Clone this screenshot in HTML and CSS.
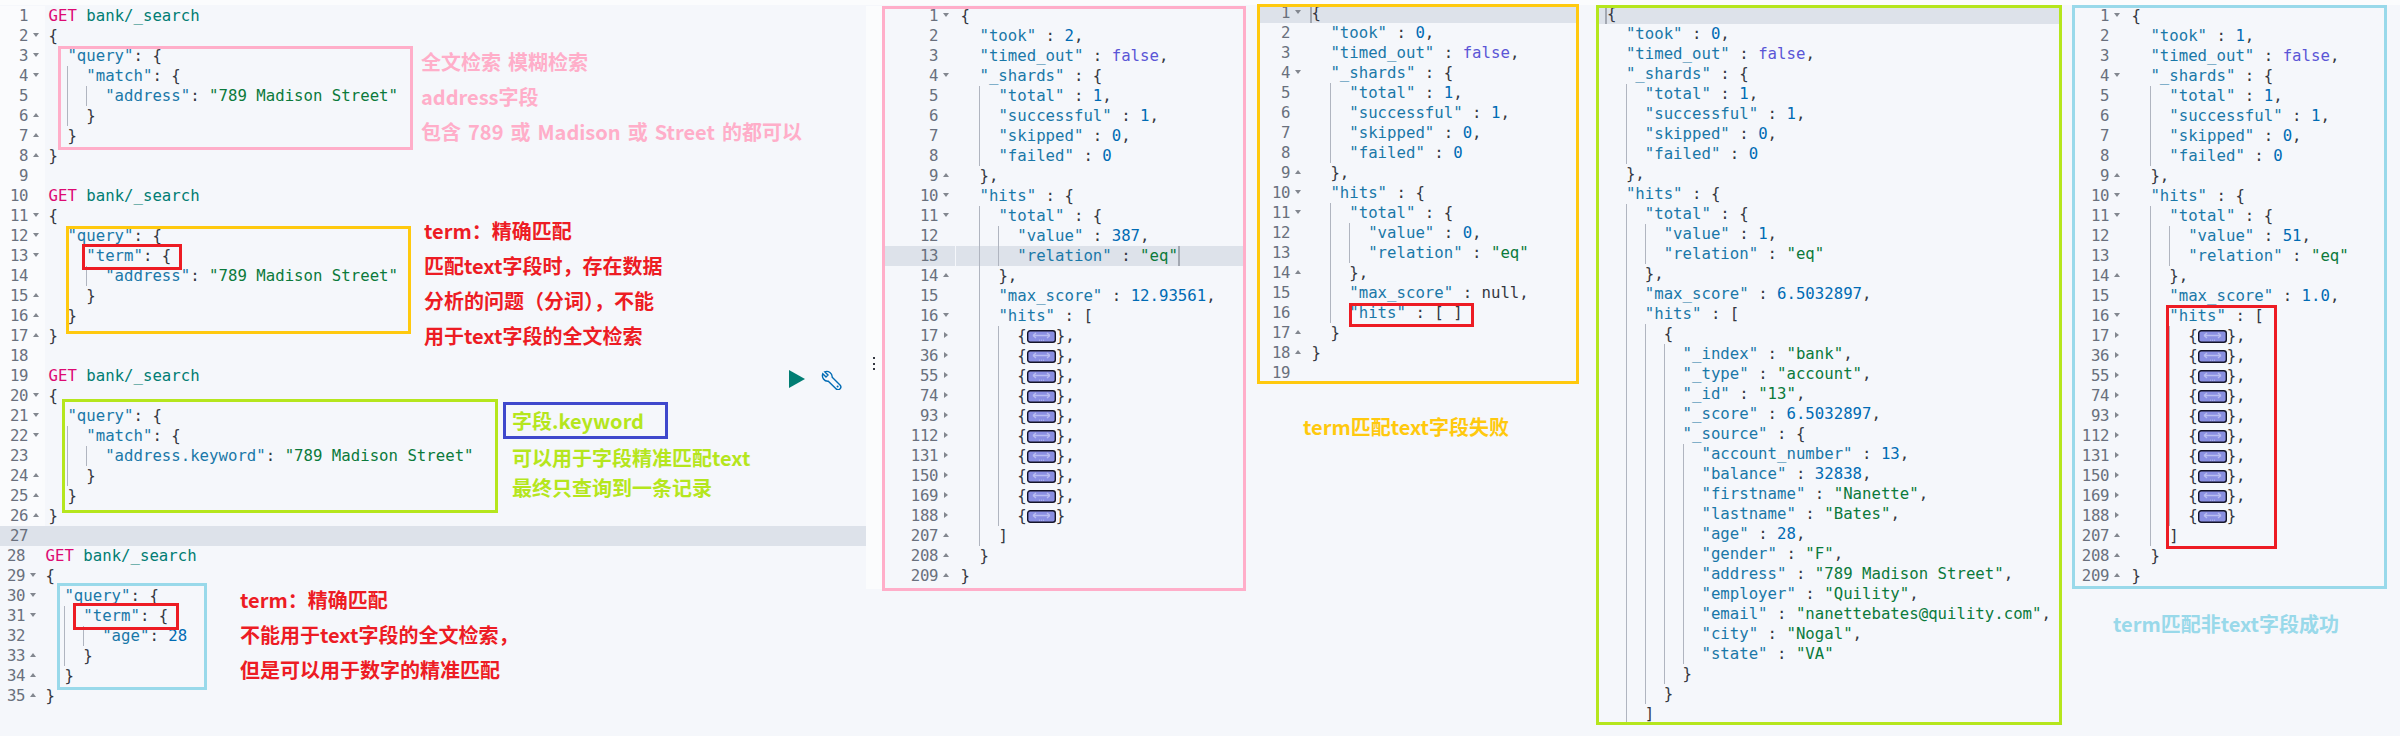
FILE: index.html
```html
<!DOCTYPE html>
<html lang="zh-CN">
<head>
<meta charset="utf-8">
<title>bank/_search</title>
<link rel="stylesheet" href="styles.css">
</head>
<body>
<svg class="defs" width="0" height="0" aria-hidden="true">
  <symbol id="fw" viewBox="0 0 29 13">
    <rect x="0.7" y="0.7" width="27.6" height="11.6" rx="2.5" fill="#8a8fe2" stroke="#15152a" stroke-width="1.4"/>
    <path d="M6 5.5H23M6 5.5L9 3M6 5.5L9 8M23 5.5L20 3M23 5.5L20 8" fill="none" stroke="#b9bdf0" stroke-width="1.3"/>
    <path d="M12 10.2h1M14 10.2h1M16 10.2h1" stroke="#b9bdf0" stroke-width="1"/>
  </symbol>
</svg>
<main class="stage">

  <section class="editor">
    <div class="row"><i class="ln">1</i><i class="fd"></i><span class="cd"><i class="m">GET</i> <i class="u">bank/_search</i></span></div>
    <div class="row"><i class="ln">2</i><i class="fd dn"></i><span class="cd">{</span></div>
    <div class="row"><i class="ln">3</i><i class="fd dn"></i><span class="cd">  <i class="k">"query"</i>: {</span></div>
    <div class="row"><i class="ln">4</i><i class="fd dn"></i><span class="cd">  <i class="g">  </i><i class="k">"match"</i>: {</span></div>
    <div class="row"><i class="ln">5</i><i class="fd"></i><span class="cd">  <i class="g">  </i><i class="g">  </i><i class="k">"address"</i>: <i class="s">"789 Madison Street"</i></span></div>
    <div class="row"><i class="ln">6</i><i class="fd up"></i><span class="cd">  <i class="g">  </i>}</span></div>
    <div class="row"><i class="ln">7</i><i class="fd up"></i><span class="cd">  }</span></div>
    <div class="row"><i class="ln">8</i><i class="fd up"></i><span class="cd">}</span></div>
    <div class="row"><i class="ln">9</i><i class="fd"></i><span class="cd"></span></div>
    <div class="row"><i class="ln">10</i><i class="fd"></i><span class="cd"><i class="m">GET</i> <i class="u">bank/_search</i></span></div>
    <div class="row"><i class="ln">11</i><i class="fd dn"></i><span class="cd">{</span></div>
    <div class="row"><i class="ln">12</i><i class="fd dn"></i><span class="cd">  <i class="k">"query"</i>: {</span></div>
    <div class="row"><i class="ln">13</i><i class="fd dn"></i><span class="cd">  <i class="g">  </i><i class="k">"term"</i>: {</span></div>
    <div class="row"><i class="ln">14</i><i class="fd"></i><span class="cd">  <i class="g">  </i><i class="g">  </i><i class="k">"address"</i>: <i class="s">"789 Madison Street"</i></span></div>
    <div class="row"><i class="ln">15</i><i class="fd up"></i><span class="cd">  <i class="g">  </i>}</span></div>
    <div class="row"><i class="ln">16</i><i class="fd up"></i><span class="cd">  }</span></div>
    <div class="row"><i class="ln">17</i><i class="fd up"></i><span class="cd">}</span></div>
    <div class="row"><i class="ln">18</i><i class="fd"></i><span class="cd"></span></div>
    <div class="row"><i class="ln">19</i><i class="fd"></i><span class="cd"><i class="m">GET</i> <i class="u">bank/_search</i></span></div>
    <div class="row"><i class="ln">20</i><i class="fd dn"></i><span class="cd">{</span></div>
    <div class="row"><i class="ln">21</i><i class="fd dn"></i><span class="cd">  <i class="k">"query"</i>: {</span></div>
    <div class="row"><i class="ln">22</i><i class="fd dn"></i><span class="cd">  <i class="g">  </i><i class="k">"match"</i>: {</span></div>
    <div class="row"><i class="ln">23</i><i class="fd"></i><span class="cd">  <i class="g">  </i><i class="g">  </i><i class="k">"address.keyword"</i>: <i class="s">"789 Madison Street"</i></span></div>
    <div class="row"><i class="ln">24</i><i class="fd up"></i><span class="cd">  <i class="g">  </i>}</span></div>
    <div class="row"><i class="ln">25</i><i class="fd up"></i><span class="cd">  }</span></div>
    <div class="row"><i class="ln">26</i><i class="fd up"></i><span class="cd">}</span></div>
    <div class="row hl"><i class="ln">27</i><i class="fd"></i><span class="cd"></span></div>
    <div class="pasted">
      <div class="row"><i class="ln">28</i><i class="fd"></i><span class="cd"><i class="m">GET</i> <i class="u">bank/_search</i></span></div>
      <div class="row"><i class="ln">29</i><i class="fd dn"></i><span class="cd">{</span></div>
      <div class="row"><i class="ln">30</i><i class="fd dn"></i><span class="cd">  <i class="k">"query"</i>: {</span></div>
      <div class="row"><i class="ln">31</i><i class="fd dn"></i><span class="cd">  <i class="g">  </i><i class="k">"term"</i>: {</span></div>
      <div class="row"><i class="ln">32</i><i class="fd"></i><span class="cd">  <i class="g">  </i><i class="g">  </i><i class="k">"age"</i>: <i class="n">28</i></span></div>
      <div class="row"><i class="ln">33</i><i class="fd up"></i><span class="cd">  <i class="g">  </i>}</span></div>
      <div class="row"><i class="ln">34</i><i class="fd up"></i><span class="cd">  }</span></div>
      <div class="row"><i class="ln">35</i><i class="fd up"></i><span class="cd">}</span></div>
    </div>
  </section>

  <div class="splitter"><i></i><i></i><i></i></div>

  <section class="panel p-pink">
    <div class="row"><i class="ln">1</i><i class="fd dn"></i><span class="cd">{</span></div>
    <div class="row"><i class="ln">2</i><i class="fd"></i><span class="cd">  <i class="k">"took"</i> : <i class="n">2</i>,</span></div>
    <div class="row"><i class="ln">3</i><i class="fd"></i><span class="cd">  <i class="k">"timed_out"</i> : <i class="b">false</i>,</span></div>
    <div class="row"><i class="ln">4</i><i class="fd dn"></i><span class="cd">  <i class="k">"_shards"</i> : {</span></div>
    <div class="row"><i class="ln">5</i><i class="fd"></i><span class="cd">  <i class="g">  </i><i class="k">"total"</i> : <i class="n">1</i>,</span></div>
    <div class="row"><i class="ln">6</i><i class="fd"></i><span class="cd">  <i class="g">  </i><i class="k">"successful"</i> : <i class="n">1</i>,</span></div>
    <div class="row"><i class="ln">7</i><i class="fd"></i><span class="cd">  <i class="g">  </i><i class="k">"skipped"</i> : <i class="n">0</i>,</span></div>
    <div class="row"><i class="ln">8</i><i class="fd"></i><span class="cd">  <i class="g">  </i><i class="k">"failed"</i> : <i class="n">0</i></span></div>
    <div class="row"><i class="ln">9</i><i class="fd up"></i><span class="cd">  },</span></div>
    <div class="row"><i class="ln">10</i><i class="fd dn"></i><span class="cd">  <i class="k">"hits"</i> : {</span></div>
    <div class="row"><i class="ln">11</i><i class="fd dn"></i><span class="cd">  <i class="g">  </i><i class="k">"total"</i> : {</span></div>
    <div class="row"><i class="ln">12</i><i class="fd"></i><span class="cd">  <i class="g">  </i><i class="g">  </i><i class="k">"value"</i> : <i class="n">387</i>,</span></div>
    <div class="row hl"><i class="ln">13</i><i class="fd split"></i><span class="cd">  <i class="g">  </i><i class="g">  </i><i class="k">"relation"</i> : <i class="s">"eq"</i><i class="cur"></i></span></div>
    <div class="row"><i class="ln">14</i><i class="fd up"></i><span class="cd">  <i class="g">  </i>},</span></div>
    <div class="row"><i class="ln">15</i><i class="fd"></i><span class="cd">  <i class="g">  </i><i class="k">"max_score"</i> : <i class="n">12.93561</i>,</span></div>
    <div class="row"><i class="ln">16</i><i class="fd dn"></i><span class="cd">  <i class="g">  </i><i class="k">"hits"</i> : [</span></div>
    <div class="row"><i class="ln">17</i><i class="fd rt"></i><span class="cd">  <i class="g">  </i><i class="g">  </i>{<svg class="fw"><use href="#fw"/></svg>},</span></div>
    <div class="row"><i class="ln">36</i><i class="fd rt"></i><span class="cd">  <i class="g">  </i><i class="g">  </i>{<svg class="fw"><use href="#fw"/></svg>},</span></div>
    <div class="row"><i class="ln">55</i><i class="fd rt"></i><span class="cd">  <i class="g">  </i><i class="g">  </i>{<svg class="fw"><use href="#fw"/></svg>},</span></div>
    <div class="row"><i class="ln">74</i><i class="fd rt"></i><span class="cd">  <i class="g">  </i><i class="g">  </i>{<svg class="fw"><use href="#fw"/></svg>},</span></div>
    <div class="row"><i class="ln">93</i><i class="fd rt"></i><span class="cd">  <i class="g">  </i><i class="g">  </i>{<svg class="fw"><use href="#fw"/></svg>},</span></div>
    <div class="row"><i class="ln">112</i><i class="fd rt"></i><span class="cd">  <i class="g">  </i><i class="g">  </i>{<svg class="fw"><use href="#fw"/></svg>},</span></div>
    <div class="row"><i class="ln">131</i><i class="fd rt"></i><span class="cd">  <i class="g">  </i><i class="g">  </i>{<svg class="fw"><use href="#fw"/></svg>},</span></div>
    <div class="row"><i class="ln">150</i><i class="fd rt"></i><span class="cd">  <i class="g">  </i><i class="g">  </i>{<svg class="fw"><use href="#fw"/></svg>},</span></div>
    <div class="row"><i class="ln">169</i><i class="fd rt"></i><span class="cd">  <i class="g">  </i><i class="g">  </i>{<svg class="fw"><use href="#fw"/></svg>},</span></div>
    <div class="row"><i class="ln">188</i><i class="fd rt"></i><span class="cd">  <i class="g">  </i><i class="g">  </i>{<svg class="fw"><use href="#fw"/></svg>}</span></div>
    <div class="row"><i class="ln">207</i><i class="fd up"></i><span class="cd">  <i class="g">  </i>]</span></div>
    <div class="row"><i class="ln">208</i><i class="fd up"></i><span class="cd">  }</span></div>
    <div class="row"><i class="ln">209</i><i class="fd up"></i><span class="cd">}</span></div>
  </section>

  <div class="col c-yellow">
    <section class="panel p-yellow">
      <div class="row hl"><i class="ln">1</i><i class="fd dn"></i><span class="cd"><i class="cur cur-start"></i>{</span></div>
      <div class="row"><i class="ln">2</i><i class="fd"></i><span class="cd">  <i class="k">"took"</i> : <i class="n">0</i>,</span></div>
      <div class="row"><i class="ln">3</i><i class="fd"></i><span class="cd">  <i class="k">"timed_out"</i> : <i class="b">false</i>,</span></div>
      <div class="row"><i class="ln">4</i><i class="fd dn"></i><span class="cd">  <i class="k">"_shards"</i> : {</span></div>
      <div class="row"><i class="ln">5</i><i class="fd"></i><span class="cd">  <i class="g">  </i><i class="k">"total"</i> : <i class="n">1</i>,</span></div>
      <div class="row"><i class="ln">6</i><i class="fd"></i><span class="cd">  <i class="g">  </i><i class="k">"successful"</i> : <i class="n">1</i>,</span></div>
      <div class="row"><i class="ln">7</i><i class="fd"></i><span class="cd">  <i class="g">  </i><i class="k">"skipped"</i> : <i class="n">0</i>,</span></div>
      <div class="row"><i class="ln">8</i><i class="fd"></i><span class="cd">  <i class="g">  </i><i class="k">"failed"</i> : <i class="n">0</i></span></div>
      <div class="row"><i class="ln">9</i><i class="fd up"></i><span class="cd">  },</span></div>
      <div class="row"><i class="ln">10</i><i class="fd dn"></i><span class="cd">  <i class="k">"hits"</i> : {</span></div>
      <div class="row"><i class="ln">11</i><i class="fd dn"></i><span class="cd">  <i class="g">  </i><i class="k">"total"</i> : {</span></div>
      <div class="row"><i class="ln">12</i><i class="fd"></i><span class="cd">  <i class="g">  </i><i class="g">  </i><i class="k">"value"</i> : <i class="n">0</i>,</span></div>
      <div class="row"><i class="ln">13</i><i class="fd"></i><span class="cd">  <i class="g">  </i><i class="g">  </i><i class="k">"relation"</i> : <i class="s">"eq"</i></span></div>
      <div class="row"><i class="ln">14</i><i class="fd up"></i><span class="cd">  <i class="g">  </i>},</span></div>
      <div class="row"><i class="ln">15</i><i class="fd"></i><span class="cd">  <i class="g">  </i><i class="k">"max_score"</i> : <i class="nl">null</i>,</span></div>
      <div class="row"><i class="ln">16</i><i class="fd"></i><span class="cd">  <i class="g">  </i><i class="k">"hits"</i> : [ ]</span></div>
      <div class="row"><i class="ln">17</i><i class="fd up"></i><span class="cd">  }</span></div>
      <div class="row"><i class="ln">18</i><i class="fd up"></i><span class="cd">}</span></div>
      <div class="row"><i class="ln">19</i><i class="fd"></i><span class="cd"></span></div>
      <div class="mark mark-y"></div>
    </section>
    <p class="caption cap-yellow">term匹配text字段失败</p>
  </div>

  <section class="panel p-lime">
    <div class="row hl"><span class="cd"><i class="cur cur-start"></i>{</span></div>
    <div class="row"><span class="cd">  <i class="k">"took"</i> : <i class="n">0</i>,</span></div>
    <div class="row"><span class="cd">  <i class="k">"timed_out"</i> : <i class="b">false</i>,</span></div>
    <div class="row"><span class="cd">  <i class="k">"_shards"</i> : {</span></div>
    <div class="row"><span class="cd">  <i class="g">  </i><i class="k">"total"</i> : <i class="n">1</i>,</span></div>
    <div class="row"><span class="cd">  <i class="g">  </i><i class="k">"successful"</i> : <i class="n">1</i>,</span></div>
    <div class="row"><span class="cd">  <i class="g">  </i><i class="k">"skipped"</i> : <i class="n">0</i>,</span></div>
    <div class="row"><span class="cd">  <i class="g">  </i><i class="k">"failed"</i> : <i class="n">0</i></span></div>
    <div class="row"><span class="cd">  },</span></div>
    <div class="row"><span class="cd">  <i class="k">"hits"</i> : {</span></div>
    <div class="row"><span class="cd">  <i class="g">  </i><i class="k">"total"</i> : {</span></div>
    <div class="row"><span class="cd">  <i class="g">  </i><i class="g">  </i><i class="k">"value"</i> : <i class="n">1</i>,</span></div>
    <div class="row"><span class="cd">  <i class="g">  </i><i class="g">  </i><i class="k">"relation"</i> : <i class="s">"eq"</i></span></div>
    <div class="row"><span class="cd">  <i class="g">  </i>},</span></div>
    <div class="row"><span class="cd">  <i class="g">  </i><i class="k">"max_score"</i> : <i class="n">6.5032897</i>,</span></div>
    <div class="row"><span class="cd">  <i class="g">  </i><i class="k">"hits"</i> : [</span></div>
    <div class="row"><span class="cd">  <i class="g">  </i><i class="g">  </i>{</span></div>
    <div class="row"><span class="cd">  <i class="g">  </i><i class="g">  </i><i class="g">  </i><i class="k">"_index"</i> : <i class="s">"bank"</i>,</span></div>
    <div class="row"><span class="cd">  <i class="g">  </i><i class="g">  </i><i class="g">  </i><i class="k">"_type"</i> : <i class="s">"account"</i>,</span></div>
    <div class="row"><span class="cd">  <i class="g">  </i><i class="g">  </i><i class="g">  </i><i class="k">"_id"</i> : <i class="s">"13"</i>,</span></div>
    <div class="row"><span class="cd">  <i class="g">  </i><i class="g">  </i><i class="g">  </i><i class="k">"_score"</i> : <i class="n">6.5032897</i>,</span></div>
    <div class="row"><span class="cd">  <i class="g">  </i><i class="g">  </i><i class="g">  </i><i class="k">"_source"</i> : {</span></div>
    <div class="row"><span class="cd">  <i class="g">  </i><i class="g">  </i><i class="g">  </i><i class="g">  </i><i class="k">"account_number"</i> : <i class="n">13</i>,</span></div>
    <div class="row"><span class="cd">  <i class="g">  </i><i class="g">  </i><i class="g">  </i><i class="g">  </i><i class="k">"balance"</i> : <i class="n">32838</i>,</span></div>
    <div class="row"><span class="cd">  <i class="g">  </i><i class="g">  </i><i class="g">  </i><i class="g">  </i><i class="k">"firstname"</i> : <i class="s">"Nanette"</i>,</span></div>
    <div class="row"><span class="cd">  <i class="g">  </i><i class="g">  </i><i class="g">  </i><i class="g">  </i><i class="k">"lastname"</i> : <i class="s">"Bates"</i>,</span></div>
    <div class="row"><span class="cd">  <i class="g">  </i><i class="g">  </i><i class="g">  </i><i class="g">  </i><i class="k">"age"</i> : <i class="n">28</i>,</span></div>
    <div class="row"><span class="cd">  <i class="g">  </i><i class="g">  </i><i class="g">  </i><i class="g">  </i><i class="k">"gender"</i> : <i class="s">"F"</i>,</span></div>
    <div class="row"><span class="cd">  <i class="g">  </i><i class="g">  </i><i class="g">  </i><i class="g">  </i><i class="k">"address"</i> : <i class="s">"789 Madison Street"</i>,</span></div>
    <div class="row"><span class="cd">  <i class="g">  </i><i class="g">  </i><i class="g">  </i><i class="g">  </i><i class="k">"employer"</i> : <i class="s">"Quility"</i>,</span></div>
    <div class="row"><span class="cd">  <i class="g">  </i><i class="g">  </i><i class="g">  </i><i class="g">  </i><i class="k">"email"</i> : <i class="s">"nanettebates@quility.com"</i>,</span></div>
    <div class="row"><span class="cd">  <i class="g">  </i><i class="g">  </i><i class="g">  </i><i class="g">  </i><i class="k">"city"</i> : <i class="s">"Nogal"</i>,</span></div>
    <div class="row"><span class="cd">  <i class="g">  </i><i class="g">  </i><i class="g">  </i><i class="g">  </i><i class="k">"state"</i> : <i class="s">"VA"</i></span></div>
    <div class="row"><span class="cd">  <i class="g">  </i><i class="g">  </i><i class="g">  </i>}</span></div>
    <div class="row"><span class="cd">  <i class="g">  </i><i class="g">  </i>}</span></div>
    <div class="row"><span class="cd">  <i class="g">  </i>]</span></div>
  </section>

  <div class="col c-blue">
    <section class="panel p-blue">
      <div class="row"><i class="ln">1</i><i class="fd dn"></i><span class="cd">{</span></div>
      <div class="row"><i class="ln">2</i><i class="fd"></i><span class="cd">  <i class="k">"took"</i> : <i class="n">1</i>,</span></div>
      <div class="row"><i class="ln">3</i><i class="fd"></i><span class="cd">  <i class="k">"timed_out"</i> : <i class="b">false</i>,</span></div>
      <div class="row"><i class="ln">4</i><i class="fd dn"></i><span class="cd">  <i class="k">"_shards"</i> : {</span></div>
      <div class="row"><i class="ln">5</i><i class="fd"></i><span class="cd">  <i class="g">  </i><i class="k">"total"</i> : <i class="n">1</i>,</span></div>
      <div class="row"><i class="ln">6</i><i class="fd"></i><span class="cd">  <i class="g">  </i><i class="k">"successful"</i> : <i class="n">1</i>,</span></div>
      <div class="row"><i class="ln">7</i><i class="fd"></i><span class="cd">  <i class="g">  </i><i class="k">"skipped"</i> : <i class="n">0</i>,</span></div>
      <div class="row"><i class="ln">8</i><i class="fd"></i><span class="cd">  <i class="g">  </i><i class="k">"failed"</i> : <i class="n">0</i></span></div>
      <div class="row"><i class="ln">9</i><i class="fd up"></i><span class="cd">  },</span></div>
      <div class="row"><i class="ln">10</i><i class="fd dn"></i><span class="cd">  <i class="k">"hits"</i> : {</span></div>
      <div class="row"><i class="ln">11</i><i class="fd dn"></i><span class="cd">  <i class="g">  </i><i class="k">"total"</i> : {</span></div>
      <div class="row"><i class="ln">12</i><i class="fd"></i><span class="cd">  <i class="g">  </i><i class="g">  </i><i class="k">"value"</i> : <i class="n">51</i>,</span></div>
      <div class="row"><i class="ln">13</i><i class="fd"></i><span class="cd">  <i class="g">  </i><i class="g">  </i><i class="k">"relation"</i> : <i class="s">"eq"</i></span></div>
      <div class="row"><i class="ln">14</i><i class="fd up"></i><span class="cd">  <i class="g">  </i>},</span></div>
      <div class="row"><i class="ln">15</i><i class="fd"></i><span class="cd">  <i class="g">  </i><i class="k">"max_score"</i> : <i class="n">1.0</i>,</span></div>
      <div class="row"><i class="ln">16</i><i class="fd dn"></i><span class="cd">  <i class="g">  </i><i class="k">"hits"</i> : [</span></div>
      <div class="row"><i class="ln">17</i><i class="fd rt"></i><span class="cd">  <i class="g">  </i><i class="g">  </i>{<svg class="fw"><use href="#fw"/></svg>},</span></div>
      <div class="row"><i class="ln">36</i><i class="fd rt"></i><span class="cd">  <i class="g">  </i><i class="g">  </i>{<svg class="fw"><use href="#fw"/></svg>},</span></div>
      <div class="row"><i class="ln">55</i><i class="fd rt"></i><span class="cd">  <i class="g">  </i><i class="g">  </i>{<svg class="fw"><use href="#fw"/></svg>},</span></div>
      <div class="row"><i class="ln">74</i><i class="fd rt"></i><span class="cd">  <i class="g">  </i><i class="g">  </i>{<svg class="fw"><use href="#fw"/></svg>},</span></div>
      <div class="row"><i class="ln">93</i><i class="fd rt"></i><span class="cd">  <i class="g">  </i><i class="g">  </i>{<svg class="fw"><use href="#fw"/></svg>},</span></div>
      <div class="row"><i class="ln">112</i><i class="fd rt"></i><span class="cd">  <i class="g">  </i><i class="g">  </i>{<svg class="fw"><use href="#fw"/></svg>},</span></div>
      <div class="row"><i class="ln">131</i><i class="fd rt"></i><span class="cd">  <i class="g">  </i><i class="g">  </i>{<svg class="fw"><use href="#fw"/></svg>},</span></div>
      <div class="row"><i class="ln">150</i><i class="fd rt"></i><span class="cd">  <i class="g">  </i><i class="g">  </i>{<svg class="fw"><use href="#fw"/></svg>},</span></div>
      <div class="row"><i class="ln">169</i><i class="fd rt"></i><span class="cd">  <i class="g">  </i><i class="g">  </i>{<svg class="fw"><use href="#fw"/></svg>},</span></div>
      <div class="row"><i class="ln">188</i><i class="fd rt"></i><span class="cd">  <i class="g">  </i><i class="g">  </i>{<svg class="fw"><use href="#fw"/></svg>}</span></div>
      <div class="row"><i class="ln">207</i><i class="fd up"></i><span class="cd">  <i class="g">  </i>]</span></div>
      <div class="row"><i class="ln">208</i><i class="fd up"></i><span class="cd">  }</span></div>
      <div class="row"><i class="ln">209</i><i class="fd up"></i><span class="cd">}</span></div>
      <div class="mark mark-b"></div>
    </section>
    <p class="caption cap-blue">term匹配非text字段成功</p>
  </div>

  <div class="box b-pink"></div>
  <div class="box b-yellow"></div>
  <div class="box b-red1"></div>
  <div class="box b-lime"></div>
  <div class="box b-indigo">字段.keyword</div>
  <div class="box b-sky"></div>
  <div class="box b-red2"></div>

  <div class="note n-pink"><p>全文检索 模糊检索</p><p>address字段</p><p>包含 789 或 Madison 或 Street 的都可以</p></div>
  <div class="note n-red1"><p>term：精确匹配</p><p>匹配text字段时，存在数据</p><p>分析的问题（分词），不能</p><p>用于text字段的全文检索</p></div>
  <div class="note n-lime"><p>可以用于字段精准匹配text</p><p>最终只查询到一条记录</p></div>
  <div class="note n-red2"><p>term：精确匹配</p><p>不能用于text字段的全文检索，</p><p>但是可以用于数字的精准匹配</p></div>

  <div class="tools">
    <svg class="play" viewBox="0 0 16 18"><path d="M0 0L16 9L0 18Z"/></svg>
    <svg class="wrench" viewBox="0 0 21 20"><path d="M3.7 1.8L7 5L5 7L1.8 3.7A5.5 5.5 0 0 0 7.3 11.2L15 18.8A2.7 2.7 0 0 0 19 15L11.2 7.3A5.5 5.5 0 0 0 3.7 1.8Z"/><circle cx="16.6" cy="16.4" r="1"/></svg>
  </div>
</main>
</body>
</html>
```
FILE: styles.css
```css
html, body { margin: 0; padding: 0; }
body { background: #f5f7fb; }
.defs { position: absolute; }
p { margin: 0; }
i { font-style: normal; }

.stage {
  position: relative;
  display: flex;
  align-items: flex-start;
  width: 2400px;
  height: 736px;
  overflow: hidden;
  background: linear-gradient(#fbfcfd 0 5px, #f5f7fb 5px);
  font-family: "DejaVu Sans Mono", monospace;
  font-size: 15.7px;
  color: #343741;
}

.row { display: flex; height: 20px; line-height: 20px; white-space: pre; }
.row.hl { background: #dde2ea; }
.ln { flex: none; width: var(--ln); text-align: right; color: #69707d; letter-spacing: -0.4px; }
.fd { flex: none; position: relative; width: var(--fd); }
.fd.split { box-shadow: inset -1px 0 #f5f7fb; }
.fd::after { content: ""; position: absolute; left: 5px; top: 7px; width: 0; height: 0; border-style: solid; border-color: transparent; }
.fd.dn::after { border-width: 4px 3px 0; border-top-color: #82878f; }
.fd.up::after { border-width: 0 3px 4px; border-bottom-color: #82878f; }
.fd.rt::after { border-width: 3.5px 0 3.5px 4px; border-left-color: #82878f; left: 6px; top: 6px; }
.cd { flex: 1; padding-left: var(--pad); }

.k { color: #1a78a8; }
.s { color: #0b7a3b; }
.n { color: #006bb4; }
.b { color: #5a55d6; }
.nl { color: #343741; }
.m { color: #dd0a73; }
.u { color: #017d73; }
.g { display: inline-block; width: 18.9px; height: 20px; vertical-align: top; box-shadow: inset 1px 0 #b0b5c0; }
.cur { display: inline-block; width: 2px; height: 20px; margin-right: -2px; vertical-align: top; background: #a3a8b2; }
.cur-start { margin-left: -2px; margin-right: 0; }
.fw { display: inline-block; width: 29px; height: 13px; vertical-align: -2px; }

.editor { --ln: 28px; --fd: 17px; --pad: 3.5px; flex: none; width: 866px; margin-top: 6px; }
.editor > .row:not(.hl) .ln, .editor > .row:not(.hl) .fd { background: #fafbfd; }
.pasted { margin-left: -3px; }

.splitter {
  flex: none;
  display: flex;
  flex-direction: column;
  align-items: center;
  gap: 3.5px;
  width: 16px;
  height: 583px;
  margin-top: 6px;
  padding-top: 351px;
  box-sizing: border-box;
  background: #fbfcfd;
}
.splitter i { width: 2px; height: 2px; background: #343741; }

.panel { position: relative; outline-style: solid; outline-width: 3px; outline-offset: -3px; box-sizing: border-box; flex: none; overflow: hidden; }
.col { flex: none; }
.caption { font-family: "Noto Sans CJK SC", sans-serif; font-weight: 700; font-size: 20px; line-height: 24px; white-space: nowrap; }

.p-pink { --ln: 56px; --fd: 17.6px; --pad: 5px; width: 364px; height: 585px; margin-top: 6px; outline-color: #ffaec9; }
.c-yellow { width: 322px; margin-left: 11px; margin-top: 4px; }
.p-yellow { --ln: 33px; --fd: 17px; --pad: 4.5px; height: 380px; outline-color: #ffc90e; }
.p-yellow > .row:first-child { margin-top: -1px; }
.p-lime { --pad: 11px; width: 466px; height: 720px; margin-left: 17px; margin-top: 5px; outline-color: #b5e61d; }
.p-lime > .row:first-child { margin-top: -1px; }
.c-blue { width: 315px; margin-left: 10px; margin-top: 5px; }
.p-blue { --ln: 37px; --fd: 17px; --pad: 5.5px; height: 584px; outline-color: #99d9ea; }
.p-blue > .row:first-child { margin-top: 0.5px; }

.cap-yellow { color: #ffc90e; margin-top: 31px; padding-left: 46px; }
.cap-blue { color: #99d9ea; margin-top: 23px; padding-left: 41px; }

.mark { position: absolute; box-sizing: border-box; border: 3px solid #ed1c24; }
.mark-y { left: 92px; top: 299px; width: 125px; height: 24px; }
.mark-b { left: 94px; top: 300px; width: 111px; height: 244px; }

.box { position: absolute; box-sizing: border-box; border: 3px solid; }
.b-pink { left: 58px; top: 46px; width: 355px; height: 104px; border-color: #ffaec9; }
.b-yellow { left: 66px; top: 226px; width: 345px; height: 108px; border-color: #ffc90e; }
.b-red1 { left: 82px; top: 244px; width: 100px; height: 26px; border-color: #ed1c24; }
.b-lime { left: 62px; top: 399px; width: 436px; height: 114px; border-color: #b5e61d; }
.b-indigo {
  left: 503px; top: 402px; width: 165px; height: 37px; padding-left: 6px;
  border-color: #3f48cc; color: #b5e61d;
  font-family: "Noto Sans CJK SC", sans-serif; font-weight: 700; font-size: 20px; line-height: 31px;
}
.b-sky { left: 57px; top: 583px; width: 150px; height: 107px; border-color: #99d9ea; }
.b-red2 { left: 73px; top: 603px; width: 106px; height: 27px; border-color: #ed1c24; }

.note { position: absolute; font-family: "Noto Sans CJK SC", sans-serif; font-weight: 700; font-size: 20px; line-height: 35px; white-space: nowrap; }
.n-pink { left: 421px; top: 44px; color: #ffaec9; word-spacing: 2.5px; }
.n-red1 { left: 424px; top: 213px; color: #ed1c24; }
.n-lime { left: 512px; top: 443px; line-height: 30px; color: #b5e61d; }
.n-red2 { left: 240px; top: 582px; color: #ed1c24; }

.tools { position: absolute; left: 789px; top: 370px; display: flex; gap: 16px; align-items: flex-start; }
.play { width: 16px; height: 18px; fill: #017d73; }
.wrench { width: 21px; height: 20px; fill: none; stroke: #006bb4; stroke-width: 1.4; }
.wrench circle { fill: #006bb4; stroke: none; }
```
